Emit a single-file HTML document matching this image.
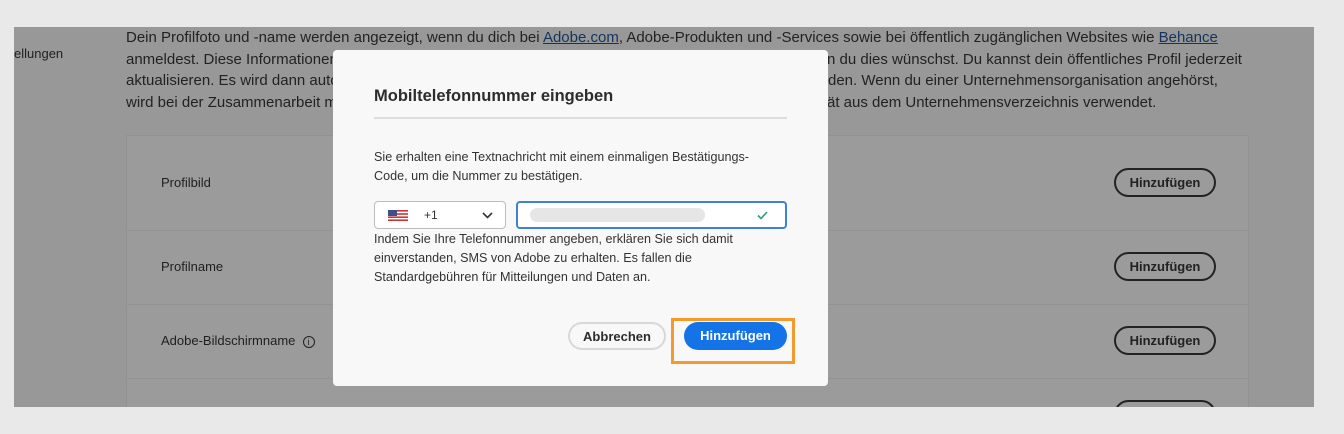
<!DOCTYPE html>
<html><head><meta charset="utf-8"><style>
*{margin:0;padding:0;box-sizing:border-box}
body{width:1344px;height:434px;background:#e9e9e9;font-family:"Liberation Sans",sans-serif;position:relative;overflow:hidden}
.ov{position:absolute;left:14px;top:27px;width:1300px;height:380px;background:#989898;overflow:hidden}
.t{position:absolute;font-size:14px;color:#1f1f1f;white-space:nowrap}
.pl{position:absolute;font-size:15px;color:#222;white-space:nowrap;line-height:18px}
.pl u{color:#13345f}
.card{position:absolute;left:112px;top:108px;width:1123px;height:300px;background:#9b9b9b;border:1px solid #929292}
.row{position:absolute;left:0;width:100%;border-top:1px solid #929292}
.lab{position:absolute;left:34px;font-size:13px;color:#1f1f1f}
.ob{position:absolute;left:987px;width:102px;height:29px;border:2px solid #222;border-radius:15px;font-size:13px;font-weight:bold;color:#222;text-align:center;line-height:25px}
.m{position:absolute;left:333px;top:50px;width:495px;height:336px;background:#f8f8f8;border-radius:4px}
.mt{position:absolute;left:41px;top:37px;font-size:16.5px;font-weight:bold;color:#2c2c2c}
.hr{position:absolute;left:41px;top:67px;width:413px;height:2px;background:#dcdcdc}
.b{position:absolute;left:41px;font-size:12.6px;color:#333;line-height:19px;white-space:nowrap}
.sel{position:absolute;left:41px;top:151px;width:132px;height:28px;border:1px solid #bcbcbc;border-radius:4px;background:#fff}
.inp{position:absolute;left:183px;top:151px;width:271px;height:28px;border:2px solid #3b82d8;border-radius:4px;background:#fff}
.btn{position:absolute;top:272px;height:28px;border-radius:14px;font-size:13px;font-weight:bold;text-align:center;line-height:26px}
</style></head><body>
<div class="ov">
<div class="t" style="left:0;top:19px;font-size:13px">ellungen</div>
<div class="pl" style="left:112px;top:2px">Dein Profilfoto und -name werden angezeigt, wenn du dich bei <u>Adobe.com</u>, Adobe-Produkten und -Services sowie bei öffentlich zugänglichen Websites wie <u>Behance</u></div>
<div class="pl" style="left:112px;top:24px">anmeldest. Diese Informationen werden</div>
<div class="pl" style="left:112px;top:45px">aktualisieren. Es wird dann automatisch</div>
<div class="pl" style="left:112px;top:67px">wird bei der Zusammenarbeit mit Kollegen</div>
<div class="pl" style="left:813px;top:24px">n du dies wünschst. Du kannst dein öffentliches Profil jederzeit</div>
<div class="pl" style="left:814px;top:45px">den. Wenn du einer Unternehmensorganisation angehörst,</div>
<div class="pl" style="left:813px;top:67px">ät aus dem Unternehmensverzeichnis verwendet.</div>
<div class="card">
<div class="lab" style="top:39px">Profilbild</div>
<div class="ob" style="top:32px">Hinzufügen</div>
<div class="row" style="top:94px"></div>
<div class="lab" style="top:123px">Profilname</div>
<div class="ob" style="top:116px">Hinzufügen</div>
<div class="row" style="top:168px"></div>
<div class="lab" style="top:197px">Adobe-Bildschirmname &nbsp;<span style="display:inline-block;width:12px;height:12px;border:1px solid #222;border-radius:50%;font-size:9px;text-align:center;line-height:10px;vertical-align:middle">i</span></div>
<div class="ob" style="top:190px">Hinzufügen</div>
<div class="row" style="top:242px"></div>
<div class="ob" style="top:264px">Hinzufügen</div>
</div>
</div>
<div class="m">
<div class="mt">Mobiltelefonnummer eingeben</div>
<div class="hr"></div>
<div class="b" style="top:98px">Sie erhalten eine Textnachricht mit einem einmaligen Bestätigungs-<br>Code, um die Nummer zu bestätigen.</div>
<div class="sel">
<svg style="position:absolute;left:13px;top:8px" width="20" height="11"><rect width="20" height="11" fill="#fff"/><rect y="0" width="20" height="1.6" fill="#c33"/><rect y="3.2" width="20" height="1.6" fill="#c33"/><rect y="6.4" width="20" height="1.6" fill="#c33"/><rect y="9.4" width="20" height="1.6" fill="#c33"/><rect width="9" height="6" fill="#3c4f8a"/></svg>
<span style="position:absolute;left:49px;top:6px;font-size:12px;color:#333">+1</span>
<svg style="position:absolute;left:107px;top:10px" width="11" height="7"><path d="M1 1l4.5 4.5L10 1" stroke="#333" stroke-width="1.6" fill="none"/></svg>
</div>
<div class="inp">
<div style="position:absolute;left:12px;top:5px;width:175px;height:14px;background:#e6e6e6;border-radius:7px"></div>
<svg style="position:absolute;left:239px;top:8px" width="11" height="9"><path d="M1 4.5l3 3L10 1" stroke="#2d9d78" stroke-width="1.6" fill="none"/></svg>
</div>
<div class="b" style="top:180px">Indem Sie Ihre Telefonnummer angeben, erklären Sie sich damit<br>einverstanden, SMS von Adobe zu erhalten. Es fallen die<br>Standardgebühren für Mitteilungen und Daten an.</div>
<div class="btn" style="left:235px;width:98px;border:2px solid #d8d8d8;color:#2c2c2c">Abbrechen</div>
<div style="position:absolute;left:338px;top:268px;width:124px;height:46px;border:3px solid #f29a2e"></div>
<div class="btn" style="left:351px;width:103px;background:#1473e6;color:#fff;line-height:28px">Hinzufügen</div>
</div>
</body></html>
